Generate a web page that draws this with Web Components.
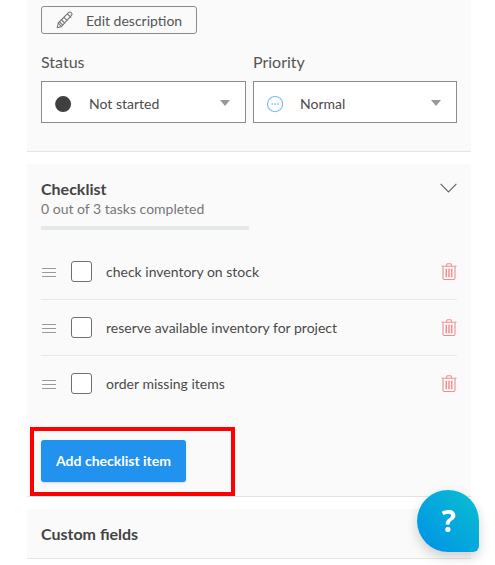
<!DOCTYPE html>
<html>
<head>
<meta charset="utf-8">
<title>Task</title>
<style>
  html, body { margin: 0; height: 565px; overflow: hidden; background: #fff; }
  body { font-family: Lato, "Open Sans", sans-serif; color: #4a4a4a; }
</style>
</head>
<body>
<task-page>
  <task-card class="top">
    <edit-button>Edit description</edit-button>
    <div style="display:flex;gap:7px;margin-top:18px">
      <status-select label="Status" value="Not started" icon="dot" style="width:205px"></status-select>
      <status-select label="Priority" value="Normal" icon="more" style="width:204px"></status-select>
    </div>
  </task-card>
  <check-list title="Checklist" summary="0 out of 3 tasks completed">
    <check-item>check inventory on stock</check-item>
    <check-item>reserve available inventory for project</check-item>
    <check-item last>order missing items</check-item>
  </check-list>
  <task-card class="fields"><b style="font-size:16px;color:#444;line-height:20px;display:block">Custom fields</b></task-card>
</task-page>
<help-bubble></help-bubble>

<script>
class TaskPage extends HTMLElement {
  connectedCallback() {
    this.attachShadow({ mode: "open" });
    this.shadowRoot.innerHTML = `
      <style>
        :host { display: flex; flex-direction: column; gap: 12px; width: 444px; margin-left: 27px; }
        ::slotted(.top) { --pad: 6px 14px 28px; }
        ::slotted(.fields) { --pad: 15px 14px 14px; }
      </style>
      <slot></slot>`;
  }
}

class TaskCard extends HTMLElement {
  connectedCallback() {
    this.attachShadow({ mode: "open" });
    this.shadowRoot.innerHTML = `
      <style>
        :host {
          display: block;
          background: #fafafa;
          border-bottom: 1px solid #e4e4e4;
          padding: var(--pad, 0 14px);
        }
      </style>
      <slot></slot>`;
  }
}

class EditButton extends HTMLElement {
  connectedCallback() {
    this.attachShadow({ mode: "open" });
    this.shadowRoot.innerHTML = `
      <style>
        :host {
          display: flex;
          align-items: center;
          box-sizing: border-box;
          width: 156px;
          height: 28px;
          padding-left: 14px;
          border: 1px solid #8c8c8c;
          border-radius: 3px;
          font-size: 14px;
          color: #555;
        }
        svg { margin-right: 13px; flex: none; }
      </style>
      <svg width="17" height="18" viewBox="0 0 17 18" fill="none" stroke="#777" stroke-width="1.1" stroke-linejoin="round">
        <path d="M1.2 16.8 2.2 12 12.8 1.4a1.4 1.4 0 0 1 2 0l.8.8a1.4 1.4 0 0 1 0 2L5.4 15.6z"/>
        <path d="M11.4 2.8l3.8 3.8M3.6 11l3.2 3.2M5.6 9l3 3M8 6.4l3 3M2.2 12l3.2 3.6"/>
      </svg>
      <slot></slot>`;
  }
}

class StatusSelect extends HTMLElement {
  connectedCallback() {
    const dot = `<svg width="17" height="17" viewBox="0 0 17 17"><circle cx="8.1" cy="8.1" r="8" fill="#404040"/></svg>`;
    const more = `<svg width="17" height="17" viewBox="0 0 17 17" fill="none"><circle cx="8.1" cy="8.1" r="7.6" stroke="#78bdf5" stroke-width="1.1"/><path d="M4.6 8.1h1.4M7.4 8.1h1.4M10.2 8.1h1.4" stroke="#6db6f3" stroke-width="1.5"/></svg>`;
    this.attachShadow({ mode: "open" });
    this.shadowRoot.innerHTML = `
      <style>
        :host { display: block; }
        label { display: block; font-size: 16px; line-height: 20px; color: #555; margin-bottom: 9px; }
        .box {
          display: flex;
          align-items: center;
          box-sizing: border-box;
          height: 42px;
          padding: 0 13px;
          background: #fff;
          border: 1px solid #8c8c8c;
          font-size: 14px;
          color: #4a4a4a;
        }
        .icon { display: flex; width: 34px; flex: none; margin-top: 5px; }
        .more .icon { width: 33px; }
        .value { flex: 1; margin-top: 3px; }
        .caret {
          width: 0; height: 0;
          margin: 1px 2px 0 0;
          border: 5px solid transparent;
          border-top: 6px solid #999;
          border-bottom: 0;
        }
      </style>
      <label>${this.getAttribute("label")}</label>
      <div class="box ${this.getAttribute("icon")}">
        <span class="icon">${this.getAttribute("icon") === "dot" ? dot : more}</span>
        <span class="value">${this.getAttribute("value")}</span>
        <span class="caret"></span>
      </div>`;
  }
}

class CheckList extends HTMLElement {
  connectedCallback() {
    this.attachShadow({ mode: "open" });
    this.shadowRoot.innerHTML = `
      <style>
        :host {
          display: block;
          position: relative;
          background: #fafafa;
          border-bottom: 1px solid #e4e4e4;
          padding: 15px 14px 14px;
        }
        header { display: flex; justify-content: space-between; }
        h2 { margin: 0; font-size: 16px; line-height: 20px; font-weight: 700; color: #444; }
        p { margin: 0; font-size: 14px; line-height: 20px; color: #777; }
        .bar { width: 208px; height: 4px; margin-top: 7px; background: #e5e8e9; }
        .rows { margin-top: 14px; }
        button {
          display: block;
          width: 145px;
          height: 42px;
          margin-top: 29px;
          padding: 0 0 2px;
          border: 0;
          border-radius: 3px;
          background: #2192ee;
          color: #fff;
          font: 700 14px Lato, sans-serif;
          box-shadow: 0 1px 2px rgba(0,0,0,.15);
        }
        .mark {
          position: absolute;
          left: 3px;
          top: 263px;
          width: 197px;
          height: 61px;
          border: 4px solid #f00;
        }
        .chev { margin: 4px 0 0 0; }
      </style>
      <header>
        <div>
          <h2>${this.getAttribute("title")}</h2>
          <p>${this.getAttribute("summary")}</p>
        </div>
        <svg class="chev" width="17" height="10" viewBox="0 0 17 10" fill="none" stroke="#666" stroke-width="1.2"><path d="M.6.8l7.9 8 7.9-8"/></svg>
      </header>
      <div class="bar"></div>
      <div class="rows"><slot></slot></div>
      <button>Add checklist item</button>
      <div class="mark"></div>`;
  }
}

class CheckItem extends HTMLElement {
  connectedCallback() {
    this.attachShadow({ mode: "open" });
    this.shadowRoot.innerHTML = `
      <style>
        :host {
          display: flex;
          align-items: center;
          box-sizing: border-box;
          height: 56px;
          border-bottom: 1px solid #e8e8e8;
          font-size: 14px;
          color: #4a4a4a;
        }
        :host([last]) { border-bottom: 0; height: 55px; }
        .grip { flex: none; margin: 1px 15px 0 1px; }
        .box {
          flex: none;
          box-sizing: border-box;
          width: 21px;
          height: 21px;
          margin-right: 14px;
          background: #fff;
          border: 1px solid #6f6f6f;
          border-radius: 3px;
        }
        .text { flex: 1; }
        .trash { flex: none; }
      </style>
      <svg class="grip" width="14" height="9" viewBox="0 0 14 9" stroke="#999" stroke-width="1"><path d="M0 .5h14M0 4.5h14M0 8.5h14"/></svg>
      <span class="box"></span>
      <span class="text"><slot></slot></span>
      <svg class="trash" width="16" height="17" viewBox="0 0 16 17" fill="none" stroke="#f58d8f" stroke-width="1.1">
        <path d="M.5 3.3h15M5.6 3.1V1.7q0-1 1-1h2.8q1 0 1 1v1.4"/>
        <path d="M2 3.5v11.6q0 1.4 1.4 1.4h9.2q1.4 0 1.4-1.4V3.5"/>
        <path d="M5.3 5.8v8.4M8 5.8v8.4M10.7 5.8v8.4" stroke-width="1.5"/>
      </svg>`;
  }
}

class HelpBubble extends HTMLElement {
  connectedCallback() {
    this.attachShadow({ mode: "open" });
    this.shadowRoot.innerHTML = `
      <style>
        :host {
          position: fixed;
          left: 417px;
          top: 490px;
          width: 62px;
          height: 62px;
          box-sizing: border-box;
          padding: 0 0 2px 2px;
          display: flex;
          align-items: center;
          justify-content: center;
          border-radius: 50% 50% 6px 50%;
          background: linear-gradient(45deg, #0090e8, #0ac0cf);
          box-shadow: 0 5px 12px rgba(0,0,0,.18);
          color: #fff;
          font: 700 30px "Open Sans", sans-serif;
        }
      </style>
      ?`;
  }
}

customElements.define("task-page", TaskPage);
customElements.define("task-card", TaskCard);
customElements.define("edit-button", EditButton);
customElements.define("status-select", StatusSelect);
customElements.define("check-list", CheckList);
customElements.define("check-item", CheckItem);
customElements.define("help-bubble", HelpBubble);
</script>
</body>
</html>
